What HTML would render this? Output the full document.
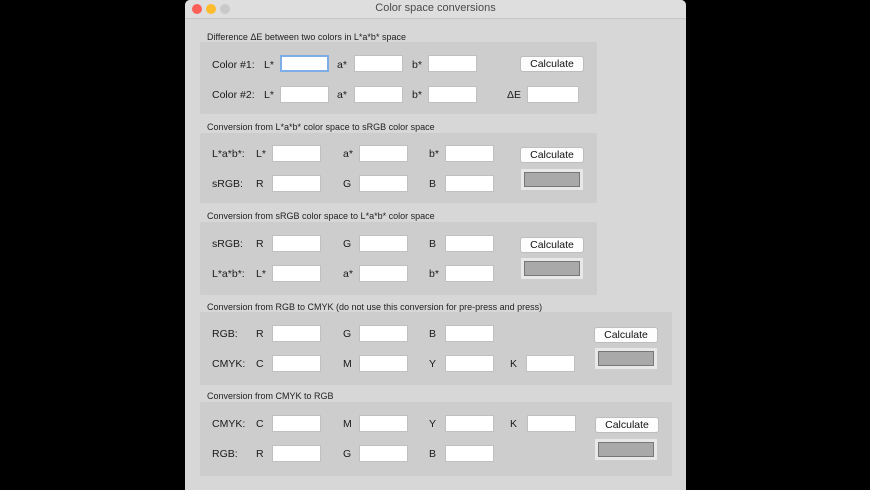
<!DOCTYPE html><html><head><style>
body{margin:0;width:870px;height:490px;background:#000;position:relative;overflow:hidden;font-family:"Liberation Sans",sans-serif;}
.win{position:absolute;left:185px;top:0;width:501px;height:490px;background:#d7d7d7;border-radius:5px 5px 0 0;overflow:hidden}
.tb{position:absolute;left:0;top:0;width:501px;height:18px;background:#dedede;border-bottom:1px solid #c8c8c8;text-align:center;font-size:11px;line-height:17px;color:#4a4a4a}
.dot{position:absolute;top:4px;width:10px;height:10px;border-radius:50%}
.a{position:absolute}
.g{position:absolute;background:#cdcdcd;border-radius:2px}
.h{position:absolute;font-size:9px;color:#222}
.l{position:absolute;font-size:10.5px;color:#1a1a1a}
.f{position:absolute;width:49px;height:17px;background:#fff;border:1px solid #c0c0c0;box-sizing:border-box}
.b{position:absolute;width:64px;height:16px;background:#fdfdfd;border:1px solid #bdbdbd;border-radius:3px;box-sizing:border-box;font-size:10.5px;text-align:center;line-height:14px;color:#111}
.s{position:absolute;width:62px;height:21px;background:#e8e8e8;box-sizing:border-box;padding:3px}
.s div{width:100%;height:100%;background:#a9a9a9;border:1px solid #777;box-sizing:border-box}
</style></head><body>
<div class="win">
<div class="tb">Color space conversions</div>
<div class="dot" style="left:7px;background:#fc5f57"></div>
<div class="dot" style="left:21px;background:#fdbc2e"></div>
<div class="dot" style="left:35px;background:#c9c9c9"></div>
</div>
<div class="h" style="left:207px;top:32px">Difference ΔE between two colors in L*a*b* space</div>
<div class="g" style="left:200px;top:42px;width:397px;height:72px"></div>
<div class="h" style="left:207px;top:122px">Conversion from L*a*b* color space to sRGB color space</div>
<div class="g" style="left:200px;top:133px;width:397px;height:70px"></div>
<div class="h" style="left:207px;top:211px">Conversion from sRGB color space to L*a*b* color space</div>
<div class="g" style="left:200px;top:222px;width:397px;height:73px"></div>
<div class="h" style="left:207px;top:302px">Conversion from RGB to CMYK (do not use this conversion for pre-press and press)</div>
<div class="g" style="left:200px;top:312px;width:472px;height:73px"></div>
<div class="h" style="left:207px;top:391px">Conversion from CMYK to RGB</div>
<div class="g" style="left:200px;top:402px;width:472px;height:74px"></div>

<!-- g1 -->
<div class="l" style="left:212px;top:59px">Color #1:</div><div class="l" style="left:264px;top:59px">L*</div>
<div class="f" style="left:280px;top:55px;border:2px solid #7eaee8"></div>
<div class="l" style="left:337px;top:59px">a*</div><div class="f" style="left:354px;top:55px"></div>
<div class="l" style="left:412px;top:59px">b*</div><div class="f" style="left:428px;top:55px"></div>
<div class="b" style="left:520px;top:56px">Calculate</div>
<div class="l" style="left:212px;top:89px">Color #2:</div><div class="l" style="left:264px;top:89px">L*</div>
<div class="f" style="left:280px;top:86px"></div>
<div class="l" style="left:337px;top:89px">a*</div><div class="f" style="left:354px;top:86px"></div>
<div class="l" style="left:412px;top:89px">b*</div><div class="f" style="left:428px;top:86px"></div>
<div class="l" style="left:507px;top:89px">ΔE</div><div class="f" style="left:527px;top:86px;width:52px"></div>
<!-- g2 -->
<div class="l" style="left:212px;top:148px">L*a*b*:</div><div class="l" style="left:256px;top:148px">L*</div>
<div class="f" style="left:272px;top:145px"></div>
<div class="l" style="left:343px;top:148px">a*</div><div class="f" style="left:359px;top:145px"></div>
<div class="l" style="left:429px;top:148px">b*</div><div class="f" style="left:445px;top:145px"></div>
<div class="b" style="left:520px;top:147px">Calculate</div>
<div class="l" style="left:212px;top:178px">sRGB:</div><div class="l" style="left:256px;top:178px">R</div>
<div class="f" style="left:272px;top:175px"></div>
<div class="l" style="left:343px;top:178px">G</div><div class="f" style="left:359px;top:175px"></div>
<div class="l" style="left:429px;top:178px">B</div><div class="f" style="left:445px;top:175px"></div>
<div class="s" style="left:521px;top:169px"><div></div></div>
<!-- g3 -->
<div class="l" style="left:212px;top:238px">sRGB:</div><div class="l" style="left:256px;top:238px">R</div>
<div class="f" style="left:272px;top:235px"></div>
<div class="l" style="left:343px;top:238px">G</div><div class="f" style="left:359px;top:235px"></div>
<div class="l" style="left:429px;top:238px">B</div><div class="f" style="left:445px;top:235px"></div>
<div class="b" style="left:520px;top:237px">Calculate</div>
<div class="l" style="left:212px;top:268px">L*a*b*:</div><div class="l" style="left:256px;top:268px">L*</div>
<div class="f" style="left:272px;top:265px"></div>
<div class="l" style="left:343px;top:268px">a*</div><div class="f" style="left:359px;top:265px"></div>
<div class="l" style="left:429px;top:268px">b*</div><div class="f" style="left:445px;top:265px"></div>
<div class="s" style="left:521px;top:258px"><div></div></div>
<!-- g4 -->
<div class="l" style="left:212px;top:328px">RGB:</div><div class="l" style="left:256px;top:328px">R</div>
<div class="f" style="left:272px;top:325px"></div>
<div class="l" style="left:343px;top:328px">G</div><div class="f" style="left:359px;top:325px"></div>
<div class="l" style="left:429px;top:328px">B</div><div class="f" style="left:445px;top:325px"></div>
<div class="b" style="left:594px;top:327px">Calculate</div>
<div class="l" style="left:212px;top:358px">CMYK:</div><div class="l" style="left:256px;top:358px">C</div>
<div class="f" style="left:272px;top:355px"></div>
<div class="l" style="left:343px;top:358px">M</div><div class="f" style="left:359px;top:355px"></div>
<div class="l" style="left:429px;top:358px">Y</div><div class="f" style="left:445px;top:355px"></div>
<div class="l" style="left:510px;top:358px">K</div><div class="f" style="left:526px;top:355px"></div>
<div class="s" style="left:595px;top:348px"><div></div></div>
<!-- g5 -->
<div class="l" style="left:212px;top:418px">CMYK:</div><div class="l" style="left:256px;top:418px">C</div>
<div class="f" style="left:272px;top:415px"></div>
<div class="l" style="left:343px;top:418px">M</div><div class="f" style="left:359px;top:415px"></div>
<div class="l" style="left:429px;top:418px">Y</div><div class="f" style="left:445px;top:415px"></div>
<div class="l" style="left:510px;top:418px">K</div><div class="f" style="left:527px;top:415px"></div>
<div class="b" style="left:595px;top:417px">Calculate</div>
<div class="l" style="left:212px;top:448px">RGB:</div><div class="l" style="left:256px;top:448px">R</div>
<div class="f" style="left:272px;top:445px"></div>
<div class="l" style="left:343px;top:448px">G</div><div class="f" style="left:359px;top:445px"></div>
<div class="l" style="left:429px;top:448px">B</div><div class="f" style="left:445px;top:445px"></div>
<div class="s" style="left:595px;top:439px"><div></div></div>
</body></html>
